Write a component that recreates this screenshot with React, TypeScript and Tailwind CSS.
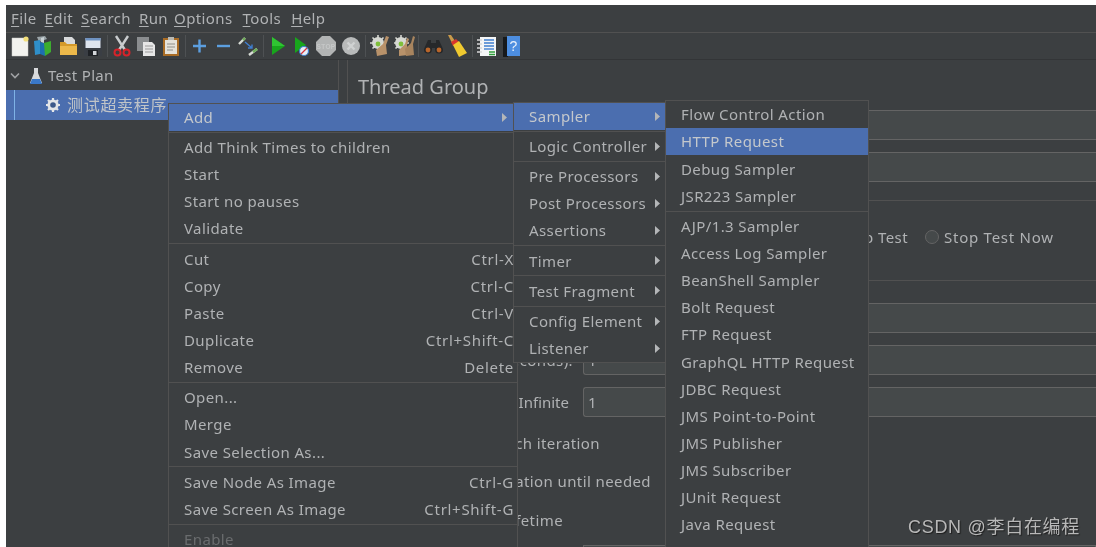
import React from "react";

type MI = { t?: string; k?: string; a?: boolean; hl?: boolean; dis?: boolean; sep?: boolean };
const S: MI = { sep: true };

const ctx: MI[] = [
  { t: "Add", a: true, hl: true }, S,
  { t: "Add Think Times to children" }, { t: "Start" }, { t: "Start no pauses" }, { t: "Validate" }, S,
  { t: "Cut", k: "Ctrl-X" }, { t: "Copy", k: "Ctrl-C" }, { t: "Paste", k: "Ctrl-V" }, { t: "Duplicate", k: "Ctrl+Shift-C" }, { t: "Remove", k: "Delete" }, S,
  { t: "Open..." }, { t: "Merge" }, { t: "Save Selection As..." }, S,
  { t: "Save Node As Image", k: "Ctrl-G" }, { t: "Save Screen As Image", k: "Ctrl+Shift-G" }, S,
  { t: "Enable", dis: true },
];
const sub: MI[] = [
  { t: "Sampler", a: true, hl: true }, S,
  { t: "Logic Controller", a: true }, S,
  { t: "Pre Processors", a: true }, { t: "Post Processors", a: true }, { t: "Assertions", a: true }, S,
  { t: "Timer", a: true }, S,
  { t: "Test Fragment", a: true }, S,
  { t: "Config Element", a: true }, { t: "Listener", a: true },
];
const third: MI[] = [
  { t: "Flow Control Action" }, { t: "HTTP Request", hl: true }, { t: "Debug Sampler" }, { t: "JSR223 Sampler" }, S,
  { t: "AJP/1.3 Sampler" }, { t: "Access Log Sampler" }, { t: "BeanShell Sampler" }, { t: "Bolt Request" }, { t: "FTP Request" },
  { t: "GraphQL HTTP Request" }, { t: "JDBC Request" }, { t: "JMS Point-to-Point" }, { t: "JMS Publisher" }, { t: "JMS Subscriber" },
  { t: "JUnit Request" }, { t: "Java Request" }, { t: "LDAP Extended Request" },
];

function Arrow() {
  return (
    <svg width="5" height="9" viewBox="0 0 5 9" className="shrink-0">
      <path d="M0 0 L5 4.5 L0 9 Z" fill="#b4b6b8" />
    </svg>
  );
}

function Menu({ items, cls, arrowRight, kRight }: { items: MI[]; cls: string; arrowRight?: string; kRight?: string }) {
  return (
    <div className={"absolute flex flex-col bg-[#3c3f41] border border-[#515151] " + cls}>
      {items.map((m, i) =>
        m.sep ? (
          <div key={i} className="h-[3px] shrink-0 flex items-center"><div className="h-px w-full bg-[#515151]" /></div>
        ) : (
          <div
            key={i}
            className={
              "relative h-[27.15px] shrink-0 flex items-center whitespace-nowrap pl-[15px] " +
              (m.hl ? "bg-[#4b6eaf] text-[#c4c8cc]" : m.dis ? "text-[#6a6c6e]" : "text-[#b0b2b4]")
            }
          >
            <span>{m.t}</span>
            {m.k && <span className={"absolute tracking-[0.7px] " + kRight}>{m.k}</span>}
            {m.a && <span className={"absolute flex " + arrowRight}><Arrow /></span>}
          </div>
        )
      )}
    </div>
  );
}

function Field({ label, value, left, labelCls }: { label: string; value?: string; left?: boolean; labelCls?: string }) {
  return (
    <div className="flex items-center h-[30px] shrink-0">
      {left ? (
        <span className="w-[72px] ml-[11px] whitespace-nowrap">{label}</span>
      ) : (
        <span className={"w-[225px] text-right whitespace-nowrap " + (labelCls ?? "")}>{label}</span>
      )}
      <div className={"flex-1 h-full bg-[#45494a] border border-r-0 border-[#646464] rounded-l-[3px] flex items-center pl-[4px] " + (left ? "ml-0" : "ml-[10px]")}>
        {value}
      </div>
    </div>
  );
}

const Ic = ({ w, ml, children }: { w: number; ml: string; children: React.ReactNode }) => (
  <svg width={w} height={22} viewBox={`0 0 ${w} 22`} className={"shrink-0 " + ml}>{children}</svg>
);
const Sep = ({ ml }: { ml: string }) => <div className={"w-px h-[22px] bg-[#4e5153] shrink-0 " + ml} />;

function Toolbar() {
  return (
    <div className="h-[27px] shrink-0 flex items-center pl-[5px] border-b border-[#333537]">
      {/* new */}
      <Ic w={18} ml="">
        <path d="M1 3h12l4 3v15H1z" fill="#f2f2ee" stroke="#cfcfc8" strokeWidth=".5" />
        <circle cx="15" cy="4" r="2.6" fill="#f3df7a" />
      </Ic>
      {/* templates */}
      <Ic w={19} ml="ml-[4px]">
        <path d="M4 2l8-1 2 3-8 3z" fill="#9aa4a8" />
        <path d="M1 6l6-1v14l-5 1z" fill="#2f8fc9" />
        <path d="M7 7l5 1v13l-5-2z" fill="#1d6fb0" />
        <path d="M11 8l7-2v11l-6 4z" fill="#3dad2f" />
        <path d="M8 3l3-1v6l-3-1z" fill="#c9d2d6" />
      </Ic>
      {/* open */}
      <Ic w={19} ml="ml-[7px]">
        <path d="M5 9V2h8l3 3v5z" fill="#d8dadb" />
        <path d="M1 7h5l2 2h10v11H1z" fill="#d59a2a" />
        <path d="M1 11h17v9H1z" fill="#ecb84a" />
      </Ic>
      {/* save */}
      <Ic w={18} ml="ml-[6px]">
        <path d="M0 2h18v19H0z" fill="#3a3e44" />
        <path d="M1.500 3h15v10h-15z" fill="#dfe5ee" />
        <path d="M1.500 3h15v2.500h-15z" fill="#6f93c2" />
        <path d="M4 15h10v6H4z" fill="#1f2226" />
        <path d="M9 16h3.500v4H9z" fill="#d4d7da" />
      </Ic>
      <Sep ml="ml-[5px]" />
      {/* cut */}
      <Ic w={18} ml="ml-[5px]">
        <path d="M3 1l9 14M15 1L6 15" stroke="#c9ccce" strokeWidth="2.4" fill="none" />
        <circle cx="4.500" cy="17.500" r="3" fill="none" stroke="#d6232a" strokeWidth="2" />
        <circle cx="13.500" cy="17.500" r="3" fill="none" stroke="#d6232a" strokeWidth="2" />
      </Ic>
      {/* copy */}
      <Ic w={20} ml="ml-[5px]">
        <path d="M1 2h12v14H1z" fill="#8a8d8f" />
        <path d="M7 7h9l3 3v11H7z" fill="#e6e6e6" />
        <path d="M9 11h8M9 14h8M9 17h8" stroke="#9a9a9a" />
      </Ic>
      {/* paste */}
      <Ic w={18} ml="ml-[6px]">
        <path d="M1 3h16v18H1z" fill="#a96c25" />
        <path d="M3 5h12v14H3z" fill="#e5e2da" />
        <path d="M6 2h6v3H6z" fill="#b8b8b2" />
        <path d="M5 9h8M5 12h8M5 15h6" stroke="#8f8f8a" />
      </Ic>
      <Sep ml="ml-[5px]" />
      <Ic w={15} ml="ml-[6px]">
        <path d="M7.500 4.500v13M1 11h13" stroke="#5c9fe0" strokeWidth="2.4" />
      </Ic>
      <Ic w={15} ml="ml-[9px]">
        <path d="M1 11h13" stroke="#5c9fe0" strokeWidth="2.4" />
      </Ic>
      {/* toggle */}
      <Ic w={20} ml="ml-[7px]">
        <path d="M1 9l6-6" stroke="#d8dcd6" strokeWidth="2.4" />
        <path d="M5 5l2-2" stroke="#6fae5a" strokeWidth="2.4" />
        <path d="M11 20l8-6" stroke="#d8dcd6" strokeWidth="2.4" />
        <path d="M15 17l4-3" stroke="#6fae5a" strokeWidth="2.4" />
        <path d="M7 7l7 6M14 9.500V13h-4" stroke="#3f7fd0" strokeWidth="1.4" fill="none" />
      </Ic>
      <Sep ml="ml-[5px]" />
      <Ic w={13} ml="ml-[8px]">
        <path d="M0 2l13 9-13 9z" fill="#18a51c" />
        <path d="M0 2l13 9H0z" fill="#2fc432" />
      </Ic>
      <Ic w={14} ml="ml-[10px]">
        <path d="M0 2l11 8-11 8z" fill="#18a51c" />
        <circle cx="9" cy="16" r="4.500" fill="#e8eef6" stroke="#3f7fd0" strokeWidth="1.2" />
        <path d="M6 19l6-6" stroke="#d6343a" strokeWidth="1.2" />
      </Ic>
      {/* stop */}
      <Ic w={20} ml="ml-[7px]">
        <path d="M6 1h8l6 6v8l-6 6H6l-6-6V7z" fill="#b2b4b4" />
        <text x="10" y="13.500" textAnchor="middle" fontSize="6.500" fontWeight="700" fill="#c6c8c8" fontFamily="Liberation Sans, sans-serif">STOP</text>
      </Ic>
      {/* shutdown */}
      <Ic w={18} ml="ml-[6px]">
        <circle cx="9" cy="11" r="9" fill="#b8baba" />
        <path d="M5.500 7.500l7 7M12.500 7.500l-7 7" stroke="#d0d2d2" strokeWidth="2.4" />
      </Ic>
      <Sep ml="ml-[5px]" />
      {/* clear */}
      <Ic w={19} ml="ml-[4px]">
        <circle cx="8" cy="8" r="6" fill="#d6d8d2" />
        <path d="M8 0v16M0 8h16M2.500 2.500l11 11M13.500 2.500l-11 11" stroke="#d6d8d2" strokeWidth="1.6" />
        <circle cx="8" cy="9" r="2.4" fill="#7fbf3a" />
        <path d="M16 1l3 1-3 8 1 9-10 2-1-6 7-6z" fill="#b8926a" />
      </Ic>
      <Ic w={21} ml="ml-[5px]">
        <circle cx="7" cy="8" r="6" fill="#d6d8d2" />
        <path d="M7 0v16M-1 8h16M1.500 2.500l11 11M12.500 2.500l-11 11" stroke="#d6d8d2" strokeWidth="1.6" />
        <circle cx="7" cy="9" r="2.4" fill="#7fbf3a" />
        <path d="M13 3l2 1-2 6 1 10-9 1 0-6 6-6z" fill="#b8926a" />
        <path d="M19 1l2 1-2 7 1 11-8 1-1-7 6-6z" fill="#a8845e" />
      </Ic>
      <Sep ml="ml-[3px]" />
      {/* find */}
      <Ic w={21} ml="ml-[4px]">
        <path d="M5 5h3v3h5V5h3l4 9a4 4 0 1 1-8 1v-2H9v2a4 4 0 1 1-8-1z" fill="#26282a" />
        <circle cx="5" cy="15" r="2.4" fill="#b9652a" />
        <circle cx="16" cy="15" r="2.4" fill="#b9652a" />
      </Ic>
      {/* broom */}
      <Ic w={20} ml="ml-[3px]">
        <path d="M1 0l3 0 4 6-3 2z" fill="#c99a4a" />
        <path d="M4 7l5-3 3 3-6 4z" fill="#d8352c" />
        <path d="M6 10l6-4 8 12-8 4z" fill="#efc92f" />
      </Ic>
      <Sep ml="ml-[5px]" />
      {/* log */}
      <Ic w={20} ml="ml-[4px]">
        <path d="M3 2h16v19H3z" fill="#f4f5f6" />
        <path d="M0 5h5M0 9h5M0 13h5M0 17h5" stroke="#d8d8d8" strokeWidth="1.5" />
        <path d="M7 5h10M7 8h10M7 11h10" stroke="#3f7fd0" strokeWidth="1.4" />
        <path d="M7 14h10" stroke="#3f7fd0" strokeWidth="1.4" />
        <path d="M12 17h6M12 19.500h6" stroke="#2f9f3a" strokeWidth="1.6" />
      </Ic>
      {/* help */}
      <Ic w={17} ml="ml-[6px]">
        <path d="M0 2h5v20H0z" fill="#17191b" />
        <path d="M4 1h13v20H4z" fill="#4d8ee0" />
        <text x="10.500" y="16" textAnchor="middle" fontSize="14" fill="#e8f0fb" fontFamily="Liberation Sans, sans-serif">?</text>
      </Ic>
    </div>
  );
}

export default function App() {
  const menus: [string, string, string][] = [
    ["F", "ile", ""], ["E", "dit", "ml-[8px]"], ["S", "earch", "ml-[8px]"], ["R", "un", "ml-[8px]"],
    ["O", "ptions", "ml-[6px]"], ["T", "ools", "ml-[10px]"], ["H", "elp", "ml-[10px]"],
  ];
  return (
    <div className="relative w-[1096px] h-[547px] overflow-hidden bg-white pl-[6px] pt-[5px] font-['Noto_Sans','Noto_Sans_CJK_SC',sans-serif] text-[15px] tracking-[0.4px] text-[#b0b2b4] blur-[0.35px]">
      <div className="relative h-full bg-[#3c3f41] flex flex-col">
        {/* menu bar */}
        <div className="h-[28px] flex items-center pl-[5px] border-b border-[#515151] shrink-0">
          {menus.map(([a, b, c]) => (
            <span key={a} className={c}><span className="underline underline-offset-2">{a}</span>{b}</span>
          ))}
        </div>
        <Toolbar />
        <div className="flex-1 flex min-h-0">
          {/* tree */}
          <div className="w-[332px] shrink-0 flex flex-col pt-[1px]">
            <div className="h-[29px] shrink-0 flex items-center pl-[4px]">
              <svg width="10" height="8" viewBox="0 0 10 8"><path d="M1 1.500l4 4 4-4" stroke="#a0a2a4" strokeWidth="1.6" fill="none" /></svg>
              <svg width="14" height="18" viewBox="0 0 14 18" className="ml-[9px]">
                <path d="M5 1h4v5l4 10H1l4-10z" fill="#d8dadc" />
                <path d="M3 12h8l2 5H1z" fill="#3a78c8" />
              </svg>
              <span className="ml-[5px] tracking-[0.3px]">Test Plan</span>
            </div>
            <div className="h-[30px] shrink-0 bg-[#4b6eaf] flex items-center relative pl-[39px] text-[#c0c4c8]">
              <span className="absolute left-[8px] top-0 bottom-0 w-px bg-[#7fb2e6]" />
              <svg width="16" height="16" viewBox="0 0 16 16">
                <circle cx="8" cy="8" r="5.600" fill="#e4e6e8" />
                <path d="M8 1v14M1 8h14M3 3l10 10M13 3L3 13" stroke="#e4e6e8" strokeWidth="2.2" />
                <circle cx="8" cy="8" r="2.8" fill="#3d5a8a" />
              </svg>
              <span className="ml-[6px] text-[16px] tracking-[0.7px]">测试超卖程序</span>
            </div>
          </div>
          {/* splitter */}
          <div className="w-[10px] shrink-0 border-x border-[#515151]" />
          {/* thread group panel */}
          <div className="flex-1 min-w-0 flex flex-col">
            <div className="h-[50px] shrink-0 pl-[10px] pt-[11px] text-[20px] leading-[32px] tracking-[0px]">Thread Group</div>
            <Field label="Name:" left />
            <div className="mt-[12px] shrink-0"><Field label="Comments:" left /></div>
            <div className="mt-[18px] h-px shrink-0 bg-[#515151]" />
            <div className="h-[72px] shrink-0 flex items-center whitespace-nowrap">
              <span className="w-[560px] text-right">Stop Test</span>
              <span className="ml-[17px] w-[14px] h-[14px] rounded-full border border-[#646464] bg-[#45494a]" />
              <span className="ml-[5px] tracking-[0.75px]">Stop Test Now</span>
            </div>
            <div className="mt-[7px] h-px shrink-0 bg-[#515151]" />
            <div className="mt-[22px] shrink-0"><Field label="Number of Threads (users):" /></div>
            <div className="mt-[12px] shrink-0"><Field label="Ramp-up period (seconds):" value="1" /></div>
            <div className="mt-[12px] shrink-0"><Field label="Loop Count: Infinite" value="1" labelCls="pr-[4px] tracking-[0px]" /></div>
            <div className="mt-[12px] h-[28px] shrink-0 flex items-center"><span className="w-[252px] text-right whitespace-nowrap">Same user on each iteration</span></div>
            <div className="mt-[10px] h-[28px] shrink-0 flex items-center"><span className="w-[303px] text-right whitespace-nowrap">Delay Thread creation until needed</span></div>
            <div className="mt-[11px] h-[28px] shrink-0 flex items-center"><span className="w-[215px] text-right whitespace-nowrap">Specify Thread lifetime</span></div>
            <div className="mt-[11px] ml-[235px] h-[30px] shrink-0 bg-[#45494a] border border-[#646464]" />
          </div>
        </div>
        {/* watermark */}
        <div className="absolute left-[902px] top-[510px] text-[18px] leading-[24px] tracking-[0.7px] font-['Liberation_Sans','Noto_Sans_CJK_SC',sans-serif] text-[#b8b8b8] [text-shadow:1px_1px_1px_#1e1e1e] whitespace-nowrap">CSDN @李白在编程</div>
      </div>

      <Menu items={ctx} cls="left-[168px] top-[102.6px] w-[350px]" arrowRight="left-[333px] top-[9px]" kRight="right-[3px]" />
      <Menu items={sub} cls="left-[513px] top-[101.6px] w-[153px]" arrowRight="left-[141px] top-[9px]" />
      <Menu items={third} cls="left-[665px] top-[100px] w-[204px]" />
    </div>
  );
}
